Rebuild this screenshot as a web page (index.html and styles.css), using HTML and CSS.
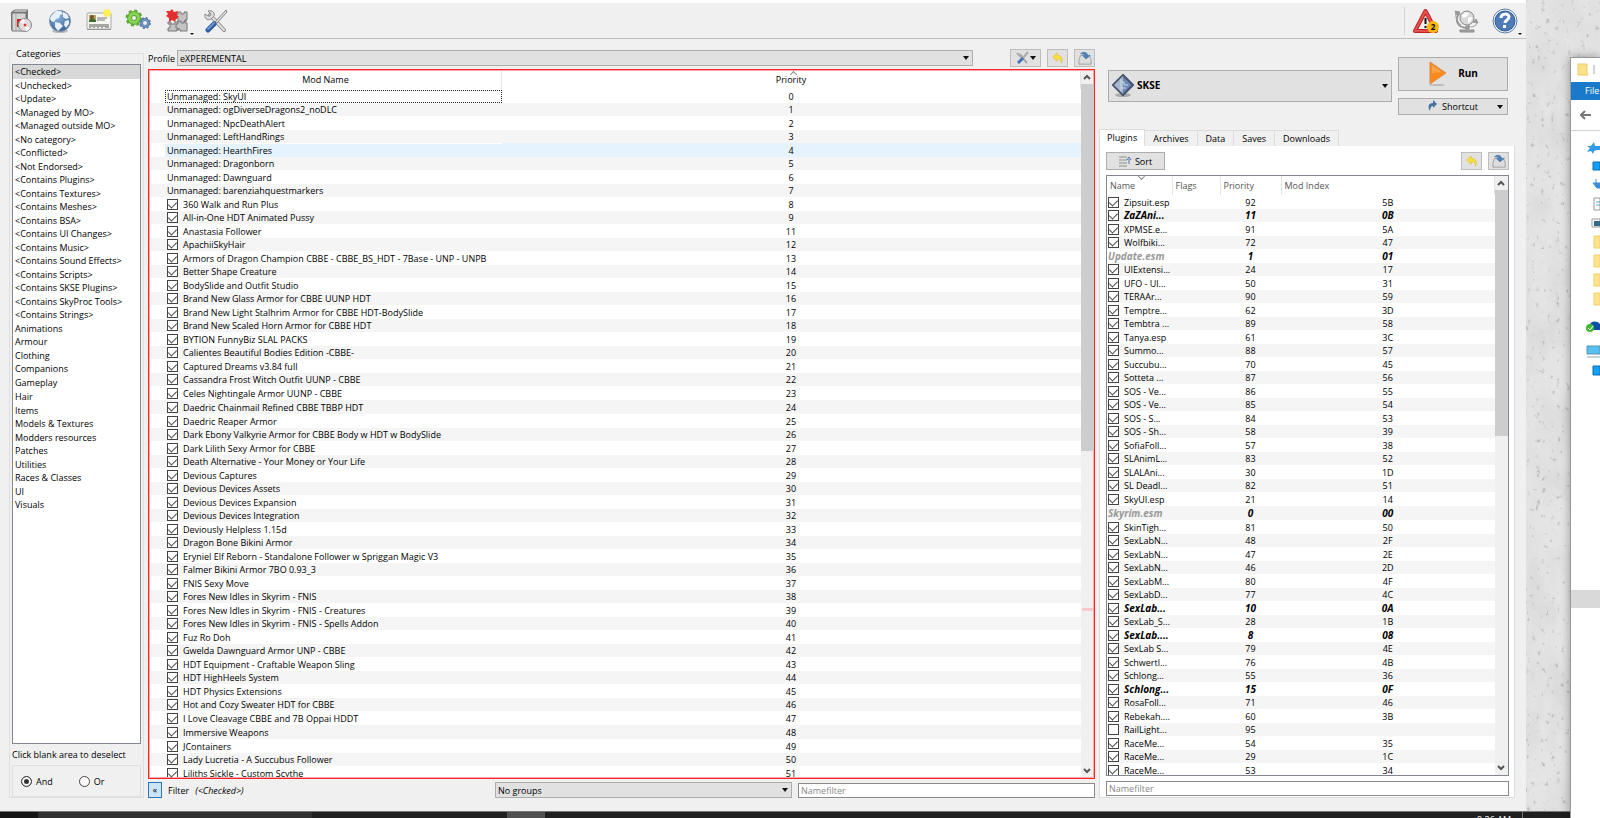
FILE: index.html
```html
<!DOCTYPE html>
<html lang="en">
	<head>
		<meta charset="utf-8">
		<title>Mod Organizer</title>
		<link rel="stylesheet" href="styles.css">
	</head>
	<body>

		<!-- desktop wallpaper -->
		<svg class="wallpaper" aria-hidden="true">
			<filter id="concrete">
				<feTurbulence type="fractalNoise" baseFrequency="0.2 0.16" numOctaves="3" seed="4"/>
				<feColorMatrix values="0 0 0 0 0.35  0 0 0 0 0.35  0 0 0 0 0.35  4 0 0 0 -2.6"/>
			</filter>
			<filter id="clouds">
				<feTurbulence type="fractalNoise" baseFrequency="0.04 0.02" numOctaves="4" seed="9"/>
				<feColorMatrix values="0 0 0 0 0.5  0 0 0 0 0.5  0 0 0 0 0.5  1 0 0 0 -0.35"/>
			</filter>
			<rect width="100%" height="100%" fill="#e4e4e4"/>
			<rect width="100%" height="100%" filter="url(#clouds)" opacity="0.5"/>
			<rect width="100%" height="100%" filter="url(#concrete)" opacity="0.7"/>
		</svg>

		<div class="screen">
			<div class="windows">
				<div class="app">
					<nav class="toolbar">
						<button class="tool" title="Install Mod">
							<svg width="24" height="24" viewBox="0 0 24 24"><path d="M2 3l3-2h14v20H2z" fill="#777"/><path d="M3 4h14v18H3z" fill="#d5d5d5" stroke="#777"/><path d="M3 3l3-2h13l-2 2z" fill="#eee" stroke="#777"/><path d="M7 5v16" stroke="#aaa"/><path d="M8 10h4v8H8z" fill="#c22"/><circle cx="16" cy="16" r="6.500" fill="#ddd" stroke="#888"/><path d="M16 16l-5-3a6 6 0 0 1 4-3zM16 16l5 3a6 6 0 0 1-4 3z" fill="#fff"/><circle cx="16" cy="16" r="2" fill="#d33" stroke="#eee"/></svg>
						</button>
						<button class="tool" title="Nexus">
							<svg width="24" height="24" viewBox="0 0 24 24"><defs><radialGradient id="sea" cx=".4" cy=".3" r=".8"><stop offset="0" stop-color="#8fb4dd"/><stop offset="1" stop-color="#2d588f"/></radialGradient></defs><ellipse cx="12" cy="22" rx="8" ry="2" fill="#bbb"/><circle cx="12" cy="12" r="10.500" fill="url(#sea)" stroke="#7d92ad"/><path d="M4 6l4-4 5 0 2 3-3 1-1 3-3 1-2 3-3-1-1-3zM15 3l4 2 2 4-3 1-3-2zM7 13l5 1 3 3-3 3-2 2-3-4zM17 12l4-1 0 4-3 4-2-3z" fill="#e8f1fa"/></svg>
						</button>
						<button class="tool" title="Profiles">
							<svg width="26" height="24" viewBox="0 0 26 24"><rect x="1" y="4" width="24" height="16" rx="1" fill="#f7f7f2" stroke="#aaa"/><path d="M1 20.500h24" stroke="#999"/><rect x="3" y="6" width="7" height="7" fill="#aba665"/><circle cx="6" cy="8" r="2" fill="#844c26"/><path d="M3 13a3 3 0 0 1 7 0z" fill="#3e6a2d"/><path d="M11 9h10M11 11h8" stroke="#777"/><path d="M4 15v4M6 15v3M8 15v4M10 15v3M12 15v4M14 15v3M16 15v4M18 15v3M20 15v4M22 15v4" stroke="#555"/><circle cx="21" cy="4" r="3.500" fill="#fff24a" stroke="#ffe97a"/></svg>
						</button>
						<button class="tool" title="Executables">
							<svg width="26" height="24" viewBox="0 0 26 24"><circle cx="9" cy="9" r="7" fill="none" stroke="#5fa83a" stroke-width="3" stroke-dasharray="3 2.500"/><circle cx="9" cy="9" r="4.500" fill="none" stroke="#5fa83a" stroke-width="5"/><circle cx="9" cy="9" r="4.500" fill="none" stroke="#86d34e" stroke-width="3"/><circle cx="20" cy="14" r="3.500" fill="none" stroke="#5a7cab" stroke-width="3"/><circle cx="20" cy="14" r="5" fill="none" stroke="#5a7cab" stroke-width="2" stroke-dasharray="2 1.930"/><circle cx="20" cy="14" r="3.300" fill="none" stroke="#82a5cd" stroke-width="1"/></svg>
						</button>
						<button class="tool has-menu" title="Tools">
							<svg width="24" height="24" viewBox="0 0 24 24"><path d="M3 13h3v2h4v-2h3V9h-2V5h2V3h3v2h3V3h3v8h-2v3h2v8h-7v-2h-3v2H3v-3h2v-4H3z" fill="#c4c4c4" stroke="#777"/><path d="M13 12v3h-2v4h2v3M13 12h3v2h3v-2h3" fill="none" stroke="#777"/><path d="M1 2l4 0 2-2 2 3 4-1-1 4 2 2-3 2-1 3-3-2-3 2 0-4-3-2 2-2z" fill="#e52f2f"/></svg>
						</button>
						<button class="tool" title="Settings">
							<svg width="24" height="24" viewBox="0 0 24 24"><path d="M6 6l14 15" stroke="#8b8b8b" stroke-width="4" stroke-linecap="round"/><path d="M6 6l14 15" stroke="#e2e2e2" stroke-width="2" stroke-linecap="round"/><path d="M4 2l3 3-1 2-2 0-3-2c-1 4 2 7 6 5l3-3c1-3-1-6-6-5z" fill="#ddd" stroke="#888"/><path d="M22 1l1 2-10 11-2-1z" fill="#ddd" stroke="#888"/><path d="M10 15l-6 6" stroke="#2f5da0" stroke-width="5" stroke-linecap="round"/><path d="M10 14l-6 6" stroke="#6795cf" stroke-width="2" stroke-linecap="round"/></svg>
						</button>
						<span class="spacer"></span>
						<span class="divider"></span>
						<button class="tool" title="Notifications">
							<svg width="27" height="26" viewBox="0 0 27 26"><path d="M12.500 3L23 23H2z" fill="#eee" stroke="#bd2222" stroke-width="4" stroke-linejoin="round"/><path d="M12.500 3L23 23H2z" fill="none" stroke="#e65050" stroke-width="2" stroke-linejoin="round"/><path d="M12.500 10v6M12.500 18v2" stroke="#111" stroke-width="2"/><circle cx="20" cy="19" r="6" fill="#ffb70b"/><text class="badge-count" x="20" y="22" text-anchor="middle">2</text></svg>
						</button>
						<button class="tool" title="Update">
							<svg width="26" height="24" viewBox="0 0 26 24"><path d="M7 4a8 8 0 0 0 10 13" fill="none" stroke="#999" stroke-width="2"/><circle cx="14" cy="9" r="7" fill="#d9d9d9" stroke="#888"/><path d="M9 6l4-3 3 2-3 3-3 1zM15 9l4-1-1 4-3 2z" fill="#fff"/><path d="M2 2l5 1-3 3zM23 10l2 4-5-1z" fill="#999" stroke="#999"/><path d="M3 3c-1 5 1 10 5 13M24 14c-1 3-4 4-6 4" fill="none" stroke="#999"/><path d="M13 17h3v3h-3zM7 21h14v2H7z" fill="#aaa" stroke="#888"/></svg>
						</button>
						<button class="tool has-menu" title="Help">
							<svg width="26" height="26" viewBox="0 0 26 26"><circle cx="13" cy="13" r="12" fill="#f4f6fa" stroke="#5a7eb0"/><circle cx="13" cy="13" r="10" fill="#4f7ab8" stroke="#2d5590"/><path d="M9 10c0-5 8-5 8-1 0 3-4 3-4 6" fill="none" stroke="#fff" stroke-width="3"/><path d="M11 17h3v3h-3z" fill="#fff"/></svg>
						</button>
					</nav>

					<div class="main">
						<fieldset class="categories">
							<legend>Categories</legend>
							<ul class="category-list" id="categories"></ul>
							<p>Click blank area to deselect</p>
							<div class="mode">
								<label><input type="radio" name="mode" checked> And</label>
								<label><input type="radio" name="mode"> Or</label>
							</div>
						</fieldset>

						<section class="mods">
							<div class="profile">
								<label for="profile">Profile</label>
								<span class="select profile-select"><select id="profile"><option>eXPEREMENTAL</option></select></span>
								<button class="small-button wide" title="Open list options">
									<svg width="14" height="14" viewBox="0 0 14 14"><path d="M3 3l8 9" stroke="#aaa" stroke-width="2"/><path d="M1 2l3 3 2-1" fill="none" stroke="#aaa" stroke-width="2"/><path d="M12 1L7 7" stroke="#aaa" stroke-width="2"/><path d="M7 7l-5 5" stroke="#4674b4" stroke-width="3"/></svg><i class="caret"></i>
								</button>
								<button class="small-button" title="Restore backup"><svg width="12" height="12" viewBox="0 0 14 14"><path d="M1 6l5-5v3c6 0 7 5 5 9 0-4-1-5-5-5v3z" fill="#fbe03b" stroke="#e3c544"/></svg></button>
								<button class="small-button" title="Create backup"><svg width="14" height="14" viewBox="0 0 16 16"><path d="M1 10l2-5h10l2 5v5H1z" fill="#ddd" stroke="#999"/><path d="M3 3c4-3 8-1 8 2h3l-5 4-4-4h3c0-1-2-2-5-2z" fill="#4a7fbd" stroke="#5b80ad"/></svg></button>
							</div>

							<div class="tree mod-tree">
								<div class="viewport">
									<table class="mod-table">
										<colgroup><col class="c-mod"><col></colgroup>
										<thead><tr><th>Mod Name</th><th class="sort-up">Priority</th></tr></thead>
										<tbody id="mods"></tbody>
									</table>
								</div>
								<div class="scrollbar">
									<svg width="12" height="14" viewBox="0 0 12 14"><path d="M3 9l3-3 3 3" fill="none" stroke="#555" stroke-width="2"/></svg>
									<div class="track"><div class="thumb thumb-mods"></div><div class="marker"></div></div>
									<svg width="12" height="14" viewBox="0 0 12 14"><path d="M3 5l3 3 3-3" fill="none" stroke="#555" stroke-width="2"/></svg>
								</div>
							</div>

							<div class="filters">
								<button class="collapse">«</button>
								<span>Filter</span>
								<i class="active-filter">(&lt;Checked&gt;)</i>
								<span class="select group-select"><select aria-label="Groups"><option>No groups</option></select></span>
								<input class="filter" type="text" placeholder="Namefilter" aria-label="Filter mods">
							</div>
						</section>

						<section class="side">
							<div class="launch">
								<span class="select exec-select">
									<svg class="exec-icon" width="22" height="24" viewBox="0 0 22 24"><ellipse cx="11" cy="21" rx="8" ry="2" fill="#aaa"/><path d="M11 1l10 10-10 10L1 11z" fill="#6b89b8" stroke="#45546c" stroke-width="2"/><path d="M11 2v18l-9-9z" fill="#a5b7d0"/><path d="M9 5v12M9 8h3v3h4M9 14h5" stroke="#d0d9e7" fill="none"/></svg>
									<select aria-label="Executable"><option>SKSE</option></select>
								</span>
								<div class="launch-buttons">
									<button class="run"><svg width="20" height="26" viewBox="0 0 20 26"><ellipse cx="9" cy="24" rx="8" ry="1" fill="#bbb"/><path d="M2 1l16 11L2 23z" fill="#f98a1c" stroke="#e08a4a"/><path d="M4 4l10 7-10 1z" fill="#ffa448"/></svg>Run</button>
									<button class="shortcut"><svg width="10" height="12" viewBox="0 0 10 12"><path d="M2 11C-1 6 1 3 5 3V0l4 4-4 4V6C3 6 2 8 2 11z" fill="#46719f"/></svg>Shortcut<i class="caret"></i></button>
								</div>
							</div>

							<div class="tabs">
								<button class="tab active">Plugins</button>
								<button class="tab">Archives</button>
								<button class="tab">Data</button>
								<button class="tab">Saves</button>
								<button class="tab">Downloads</button>
							</div>
							<div class="pane">
								<div class="pane-tools">
									<button class="sort"><svg width="13" height="12" viewBox="0 0 13 12"><path d="M0 2h8M0 5h8M0 8h8M0 11h8" stroke="#b5bab5" stroke-width="2"/><path d="M10 9V4M8 5l2-3 2 3" stroke="#4a76ae" fill="none" stroke-width="1"/></svg>Sort</button>
									<span class="spacer"></span>
									<button class="small-button" title="Restore backup"><svg width="12" height="12" viewBox="0 0 14 14"><path d="M1 6l5-5v3c6 0 7 5 5 9 0-4-1-5-5-5v3z" fill="#fbe03b" stroke="#e3c544"/></svg></button>
									<button class="small-button" title="Create backup"><svg width="14" height="14" viewBox="0 0 16 16"><path d="M1 10l2-5h10l2 5v5H1z" fill="#ddd" stroke="#999"/><path d="M3 3c4-3 8-1 8 2h3l-5 4-4-4h3c0-1-2-2-5-2z" fill="#4a7fbd" stroke="#5b80ad"/></svg></button>
								</div>
								<div class="tree">
									<div class="viewport">
										<table class="plugin-table">
											<colgroup><col class="c-name"><col class="c-flags"><col class="c-priority"><col></colgroup>
											<thead><tr><th class="sort-down">Name</th><th>Flags</th><th>Priority</th><th>Mod Index</th></tr></thead>
											<tbody id="plugins"></tbody>
										</table>
									</div>
									<div class="scrollbar">
										<svg width="12" height="14" viewBox="0 0 12 14"><path d="M3 9l3-3 3 3" fill="none" stroke="#555" stroke-width="2"/></svg>
										<div class="track"><div class="thumb thumb-plugins"></div></div>
										<svg width="12" height="14" viewBox="0 0 12 14"><path d="M3 5l3 3 3-3" fill="none" stroke="#555" stroke-width="2"/></svg>
									</div>
								</div>
								<input class="filter" type="text" placeholder="Namefilter" aria-label="Filter plugins">
							</div>
						</section>
					</div>
				</div>
			</div>
			<div class="taskbar">
				<span class="task-start"></span><span class="task-search"></span><span class="task-gap"></span><span class="task-active"></span>
				<span class="clock">9:36 AM</span>
				<span class="show-desktop"></span>
			</div>
		</div>

		<!-- file explorer, mostly off screen -->
		<div class="explorer">
			<div class="ex-title"><svg width="20" height="14" viewBox="0 0 20 14"><path d="M1 1h9v9l1 2H1z" fill="#ffe08a" stroke="#efcc63"/><path d="M17 2v9" stroke="#aaa"/></svg></div>
			<a class="ex-file" href="#">File</a>
			<div class="ex-nav"><svg width="12" height="10" viewBox="0 0 12 10"><path d="M11 5H2M5 1L1 5l4 4" fill="none" stroke="#777" stroke-width="2"/></svg></div>
			<div class="ex-tree">
				<svg width="14" height="240" viewBox="0 0 14 240">
					<path d="M8 1l1 4 5 0v4l-3 0-3 1-1 3-2-3-4 1 3-4-3-2 4 0z" fill="#2d9be6"/>
					<path d="M7 21h7v8H7z" fill="#12a1f5" stroke="#0a6cb5"/>
					<path d="M10 38v8M7 42l4 5h3v-5z" fill="#3b8ed6" stroke="#3b8ed6"/>
					<path d="M8 57h6v12H8z" fill="#fff" stroke="#999"/><path d="M10 61h4M10 64h4" stroke="#58a6d8"/>
					<path d="M6 78h8v8H6z" fill="#fff" stroke="#999"/><path d="M8 80h6v5H8z" fill="#31698a"/>
					<path d="M8 95h6v12H8zM8 114h6v12H8zM8 133h6v12H8zM8 152h6v12H8z" fill="#ffe391" stroke="#f1cf6b"/>
					<path d="M3 186c1-6 7-7 11-3v6H5z" fill="#0d4ea8"/><circle cx="4" cy="187" r="4" fill="#3fb934"/><path d="M2 187l2 2 3-4" fill="none" stroke="#fff"/>
					<path d="M1 205h13v8H1z" fill="#58c0f1" stroke="#5b93b4"/><path d="M1 216h13" stroke="#8da9b8"/>
					<path d="M7 225h7v9H7z" fill="#12a1f5" stroke="#0a6cb5"/>
				</svg>
			</div>
			<div class="ex-selected"></div>
		</div>

		<script src="app.js"></script>
	</body>
</html>
```
FILE: styles.css
```css
* {
	box-sizing: border-box;
}

body {
	margin: 0;
	height: 100vh;
	display: flex;
	overflow: hidden;
	position: relative;
	font-family: "Open Sans", "Noto Sans", sans-serif;
	font-size: 9px;
	line-height: 13px;
	color: #000;
}

button, select, input {
	font: inherit;
	color: inherit;
	margin: 0;
	padding: 0;
	border-radius: 0;
}

svg {
	display: block;
	flex: none;
}

.wallpaper {
	position: absolute;
	top: 0;
	right: 0;
	width: 74px;
	height: 100%;
}

.screen {
	flex: 1;
	display: flex;
	flex-direction: column;
	position: relative;
	min-width: 0;
}

.windows {
	flex: 1;
	display: flex;
	min-height: 0;
	padding-right: 44px;
}

.app {
	flex: 1;
	display: flex;
	flex-direction: column;
	min-width: 0;
	background: #f0f0f0;
	border-top: 3px solid #fff;
}

/* toolbar */

.toolbar {
	display: flex;
	align-items: center;
	gap: 12px;
	height: 36px;
	padding: 0 8px 0 7px;
	border-bottom: 1px solid #bfbfbf;
}

.tool {
	position: relative;
	width: 27px;
	height: 28px;
	display: flex;
	align-items: center;
	justify-content: center;
	background: none;
	border: 0;
}

.has-menu::after {
	content: "";
	position: absolute;
	right: -4px;
	bottom: 0;
	border: 2px solid transparent;
	border-top-color: #111;
	border-bottom: 0;
}

.spacer {
	flex: 1;
}

.divider {
	width: 1px;
	height: 28px;
	background: #d5d5d5;
	margin-right: -4px;
}

.badge-count {
	font-size: 8px;
	font-weight: bold;
}

/* main area */

.main {
	flex: 1;
	display: flex;
	min-height: 0;
	padding: 8px 11px 13px 9px;
	gap: 4px;
}

.categories {
	width: 135px;
	margin: 0;
	padding: 4px 2px 0 2px;
	min-width: 0;
	display: flex;
	flex-direction: column;
	border: 1px solid #dfdfdf;
}

.categories legend {
	margin-left: 2px;
	padding: 0 2px;
}

.category-list {
	flex: 1;
	margin: 0;
	padding: 0;
	list-style: none;
	background: #fff;
	border: 1px solid #828790;
}

.category-list li {
	height: 13px;
	line-height: 14px;
	padding-left: 2px;
}

.category-list li:nth-child(odd), .category-list li:nth-child(24n) {
	height: 14px;
}

.category-list .selected {
	background: #d8d8d8;
}

.categories p {
	margin: 4px 0;
}

.mode {
	display: flex;
	align-items: center;
	gap: 26px;
	height: 32px;
	padding-left: 8px;
	border: 1px solid #dfdfdf;
}

.mode label {
	display: flex;
	align-items: center;
	gap: 4px;
}

input[type="radio"] {
	appearance: none;
	width: 11px;
	height: 11px;
	border: 1px solid #444;
	border-radius: 50%;
	background: #fff;
}

input[type="radio"]:checked {
	background: #333;
	box-shadow: inset 0 0 0 2px #fff;
}

.mods {
	flex: 1;
	min-width: 0;
	display: flex;
	flex-direction: column;
}

.profile {
	display: flex;
	align-items: center;
	height: 22px;
	gap: 6px;
}

.profile label {
	width: 23px;
	white-space: nowrap;
}

.profile-select {
	flex: 1;
	margin-right: 31px;
}

.select {
	position: relative;
	display: flex;
}

.select select {
	appearance: none;
	width: 100%;
	height: 16px;
	padding-left: 2px;
	background: #e1e1e1;
	border: 1px solid #adadad;
}

.select::after {
	content: "";
	position: absolute;
	right: 4px;
	top: 50%;
	margin-top: -2px;
	border: 3px solid transparent;
	border-top: 4px solid #111;
	border-bottom: 0;
}

.caret {
	border: 3px solid transparent;
	border-top: 4px solid #111;
	border-bottom: 0;
}

.small-button {
	display: flex;
	align-items: center;
	justify-content: center;
	width: 21px;
	height: 18px;
	background: #e1e1e1;
	border: 1px solid #bdbdbd;
}

.small-button.wide {
	width: 31px;
}

/* lists */

.tree {
	flex: 1;
	display: flex;
	min-height: 0;
	background: #fff;
	border: 1px solid #828790;
}

.mod-tree {
	border: 1px solid #f22;
	outline: 1px solid #faa;
	outline-offset: -2px;
}

.viewport {
	flex: 1;
	overflow: hidden;
}

table {
	width: 100%;
	table-layout: fixed;
	border-collapse: collapse;
}

.mod-table {
	border-left: 1px solid #fff;
}

th, td {
	padding: 0;
	height: 13px;
	line-height: 13px;
	white-space: nowrap;
	text-align: center;
}

tr:nth-child(odd) td, tr:nth-child(24n) td {
	height: 14px;
}

tbody tr:nth-child(even) {
	background: #f5f5f5;
}

th {
	position: relative;
	height: 19px;
	font-weight: normal;
	border-right: 1px solid #e5e5e5;
}

.sort-up::before, .sort-down::before {
	content: "";
	position: absolute;
	left: 50%;
	top: 2px;
	width: 4px;
	height: 4px;
	border: solid #888;
	border-width: 1px 0 0 1px;
	transform: rotate(45deg);
}

.sort-down::before {
	top: -2px;
	transform: rotate(225deg);
}

.c-mod {
	width: 352px;
}

.mod-table td:first-child {
	padding-left: 15px;
}

.mod-table .hover td:last-child, .hover .cell {
	background: #e5f3ff;
}

.cell {
	display: flex;
	align-items: center;
	height: 13px;
	gap: 5px;
	padding-left: 2px;
}

.plugin-table .cell {
	padding-left: 1px;
}

.focus .cell {
	outline: 1px dotted #222;
	outline-offset: -1px;
}

input[type="checkbox"] {
	appearance: none;
	flex: none;
	width: 11px;
	height: 11px;
	display: flex;
	justify-content: center;
	background: #fff;
	border: 1px solid #444;
}

input[type="checkbox"]:checked::after {
	content: "";
	width: 4px;
	height: 7px;
	border: solid #444;
	border-width: 0 1px 1px 0;
	transform: rotate(45deg);
}

.c-name {
	width: 65px;
}

.c-flags {
	width: 48px;
}

.c-priority {
	width: 61px;
}

.plugin-table th {
	text-align: left;
	padding-left: 3px;
	color: #555;
}

.master td {
	font-size: 10px;
	font-weight: bold;
	font-style: italic;
}

.forced .cell {
	color: #999;
}

.scrollbar {
	width: 13px;
	display: flex;
	flex-direction: column;
	background: #f0f0f0;
}

.track {
	flex: 1;
	position: relative;
}

.thumb {
	background: #cdcdcd;
}

.thumb-mods {
	height: 54%;
}

.thumb-plugins {
	height: 43%;
}

.marker {
	position: absolute;
	left: 1px;
	right: 1px;
	top: 77%;
	height: 3px;
	background: #f9c8c8;
}

.filters {
	display: flex;
	align-items: center;
	height: 16px;
	margin-top: 3px;
	gap: 6px;
}

.collapse {
	width: 14px;
	height: 16px;
	background: #cce4f7;
	border: 1px solid #2a75b5;
	line-height: 12px;
}

.active-filter {
	flex: 1;
}

.group-select, .filters .filter {
	flex: 0 0 297px;
}

.filter {
	height: 15px;
	padding: 0 2px;
	background: #fff;
	border: 1px solid #8a8a8a;
}

.filter::placeholder {
	color: #888;
}

/* right side */

.side {
	width: 416px;
	display: flex;
	flex-direction: column;
	padding-top: 10px;
}

.launch {
	display: flex;
	align-items: center;
	gap: 6px;
	padding: 0 7px 0 9px;
	height: 57px;
}

.exec-select {
	flex: 1;
}

.exec-select select {
	height: 32px;
	padding-left: 28px;
	font-size: 10px;
	font-weight: bold;
}

.exec-icon {
	position: absolute;
	left: 4px;
	top: 4px;
}

.launch-buttons {
	width: 110px;
	display: flex;
	flex-direction: column;
	gap: 7px;
}

.launch button, .sort {
	display: flex;
	align-items: center;
	justify-content: center;
	background: #e1e1e1;
	border: 1px solid #adadad;
}

.launch .run {
	height: 34px;
	gap: 10px;
	font-size: 10px;
	font-weight: bold;
}

.launch .shortcut {
	position: relative;
	height: 17px;
	gap: 4px;
}

.shortcut .caret {
	position: absolute;
	right: 4px;
	top: 6px;
}

.tabs {
	display: flex;
	align-items: flex-end;
	height: 17px;
	margin-top: 15px;
}

.tab {
	height: 16px;
	padding: 0 8px;
	background: #f0f0f0;
	border: 1px solid #dcdcdc;
	border-left: 0;
	border-bottom: 0;
	line-height: 14px;
}

.tab.active {
	height: 17px;
	padding: 0 7px;
	background: #fff;
	border-left: 1px solid #dcdcdc;
}

.pane {
	flex: 1;
	display: flex;
	flex-direction: column;
	min-height: 0;
	padding: 6px 5px 1px 6px;
	background: #fff;
	border: 1px solid #dcdcdc;
	border-top: 0;
}

.pane-tools {
	display: flex;
	gap: 6px;
	margin-bottom: 5px;
}

.sort {
	width: 59px;
	height: 18px;
	gap: 3px;
}

.pane .filter {
	margin-top: 5px;
}

/* taskbar */

.taskbar {
	display: flex;
	height: 7px;
	overflow: hidden;
	background: #202020;
	border-top: 1px solid #777;
}

.task-start {
	width: 38px;
	background: #151515;
}

.task-search {
	width: 274px;
	background: #303030;
}

.task-gap {
	width: 195px;
}

.task-active {
	width: 38px;
	background: #505050;
}

.clock {
	margin-left: auto;
	padding-right: 11px;
	line-height: 15px;
	color: #fff;
}

.show-desktop {
	width: 48px;
	border-left: 1px solid #777;
}

/* explorer */

.explorer {
	position: relative;
	width: 30px;
	margin-top: 57px;
	overflow: hidden;
	background: #fff;
	border-left: 1px solid #999;
	border-top: 1px solid #999;
	box-shadow: 0 0 10px #0005;
}

.ex-title {
	height: 24px;
	padding: 5px 6px;
}

.ex-file {
	display: block;
	height: 18px;
	padding-left: 14px;
	line-height: 18px;
	background: #1979ca;
	color: #fff;
	text-decoration: none;
}

.ex-nav {
	height: 31px;
	padding: 10px 9px;
	border-bottom: 1px solid #d0d0d0;
}

.ex-tree {
	display: flex;
	justify-content: flex-end;
	padding-top: 10px;
}

.ex-selected {
	height: 18px;
	margin-top: 209px;
	background: #d9d9d9;
}
```
FILE: app.js
```js
var categories = [
	"<Checked>", "<Unchecked>", "<Update>", "<Managed by MO>", "<Managed outside MO>", "<No category>",
	"<Conflicted>", "<Not Endorsed>", "<Contains Plugins>", "<Contains Textures>", "<Contains Meshes>",
	"<Contains BSA>", "<Contains UI Changes>", "<Contains Music>", "<Contains Sound Effects>",
	"<Contains Scripts>", "<Contains SKSE Plugins>", "<Contains SkyProc Tools>", "<Contains Strings>",
	"Animations", "Armour", "Clothing", "Companions", "Gameplay", "Hair", "Items", "Models & Textures",
	"Modders resources", "Patches", "Utilities", "Races & Classes", "UI", "Visuals"
]

var unmanaged = [
	"SkyUI", "ogDiverseDragons2_noDLC", "NpcDeathAlert", "LeftHandRings",
	"HearthFires", "Dragonborn", "Dawnguard", "barenziahquestmarkers"
]

var mods = [
	[8, "360 Walk and Run Plus"],
	[9, "All-in-One HDT Animated Pussy"],
	[11, "Anastasia Follower"],
	[12, "ApachiiSkyHair"],
	[13, "Armors of Dragon Champion CBBE - CBBE_BS_HDT - 7Base - UNP - UNPB"],
	[14, "Better Shape Creature"],
	[15, "BodySlide and Outfit Studio"],
	[16, "Brand New Glass Armor for CBBE UUNP HDT"],
	[17, "Brand New Light Stalhrim Armor for CBBE HDT-BodySlide"],
	[18, "Brand New Scaled Horn Armor for CBBE HDT"],
	[19, "BYTION FunnyBiz SLAL PACKS"],
	[20, "Calientes Beautiful Bodies Edition -CBBE-"],
	[21, "Captured Dreams v3.84 full"],
	[22, "Cassandra Frost Witch Outfit UUNP - CBBE"],
	[23, "Celes Nightingale Armor UUNP - CBBE"],
	[24, "Daedric Chainmail Refined CBBE TBBP HDT"],
	[25, "Daedric Reaper Armor"],
	[26, "Dark Ebony Valkyrie Armor for CBBE Body w HDT w BodySlide"],
	[27, "Dark Lilith Sexy Armor for CBBE"],
	[28, "Death Alternative - Your Money or Your Life"],
	[29, "Devious Captures"],
	[30, "Devious Devices Assets"],
	[31, "Devious Devices Expansion"],
	[32, "Devious Devices Integration"],
	[33, "Deviously Helpless 1.15d"],
	[34, "Dragon Bone Bikini Armor"],
	[35, "Eryniel Elf Reborn - Standalone Follower w Spriggan Magic V3"],
	[36, "Falmer Bikini Armor 7BO 0.93_3"],
	[37, "FNIS Sexy Move"],
	[38, "Fores New Idles in Skyrim - FNIS"],
	[39, "Fores New Idles in Skyrim - FNIS - Creatures"],
	[40, "Fores New Idles in Skyrim - FNIS - Spells Addon"],
	[41, "Fuz Ro Doh"],
	[42, "Gwelda Dawnguard Armor UNP - CBBE"],
	[43, "HDT Equipment - Craftable Weapon Sling"],
	[44, "HDT HighHeels System"],
	[45, "HDT Physics Extensions"],
	[46, "Hot and Cozy Sweater HDT for CBBE"],
	[47, "I Love Cleavage CBBE and 7B Oppai HDDT"],
	[48, "Immersive Weapons"],
	[49, "JContainers"],
	[50, "Lady Lucretia - A Succubus Follower"],
	[51, "Liliths Sickle - Custom Scythe"]
]

// name, priority, mod index, kind
var plugins = [
	["Zipsuit.esp", 92, "5B"], ["ZaZAni...", 11, "0B", "master"], ["XPMSE.e...", 91, "5A"],
	["Wolfbiki...", 72, "47"], ["Update.esm", 1, "01", "master forced"], ["UIExtensi...", 24, "17"],
	["UFO - Ul...", 50, "31"], ["TERAAr...", 90, "59"], ["Temptre...", 62, "3D"],
	["Tembtra ...", 89, "58"], ["Tanya.esp", 61, "3C"], ["Summo...", 88, "57"],
	["Succubu...", 70, "45"], ["Sotteta ...", 87, "56"], ["SOS - Ve...", 86, "55"],
	["SOS - Ve...", 85, "54"], ["SOS - S...", 84, "53"], ["SOS - Sh...", 58, "39"],
	["SofiaFoll...", 57, "38"], ["SLAnimL...", 83, "52"], ["SLALAni...", 30, "1D"],
	["SL Deadl...", 82, "51"], ["SkyUI.esp", 21, "14"], ["Skyrim.esm", 0, "00", "master forced"],
	["SkinTigh...", 81, "50"], ["SexLabN...", 48, "2F"], ["SexLabN...", 47, "2E"],
	["SexLabN...", 46, "2D"], ["SexLabM...", 80, "4F"], ["SexLabD...", 77, "4C"],
	["SexLab...", 10, "0A", "master"], ["SexLab_S...", 28, "1B"], ["SexLab....", 8, "08", "master"],
	["SexLab S...", 79, "4E"], ["Schwertl...", 76, "4B"], ["Schlong...", 55, "36"],
	["Schlong...", 15, "0F", "master"], ["RosaFoll...", 71, "46"], ["Rebekah....", 60, "3B"],
	["RailLight...", 95, ""], ["RaceMe...", 54, "35"], ["RaceMe...", 29, "1C"], ["RaceMe...", 53, "34"]
]

function addRow (body, name, check, values, kind) {
	var row = body.insertRow()
	row.className = kind || ''
	var label = document.createElement('label')
	label.className = 'cell'
	if (check !== null) {
		var box = document.createElement('input')
		box.type = 'checkbox'
		box.checked = check
		label.append(box)
	}
	label.append(name)
	row.insertCell().append(label)
	values.forEach(function (v) {
		row.insertCell().textContent = v
	})
}

categories.forEach(function (name, i) {
	var li = document.createElement('li')
	li.textContent = name
	if (i === 0) li.className = 'selected'
	document.getElementById('categories').append(li)
})

var modBody = document.getElementById('mods')
unmanaged.forEach(function (name, i) {
	addRow(modBody, 'Unmanaged: ' + name, null, [i], i === 0 ? 'focus' : i === 4 ? 'hover' : '')
})
mods.forEach(function (m) {
	addRow(modBody, m[1], true, [m[0]])
})

var pluginBody = document.getElementById('plugins')
plugins.forEach(function (p) {
	var forced = /forced/.test(p[3])
	addRow(pluginBody, p[0], forced ? null : p[2] !== '', ['', p[1], p[2]], p[3])
})
```
